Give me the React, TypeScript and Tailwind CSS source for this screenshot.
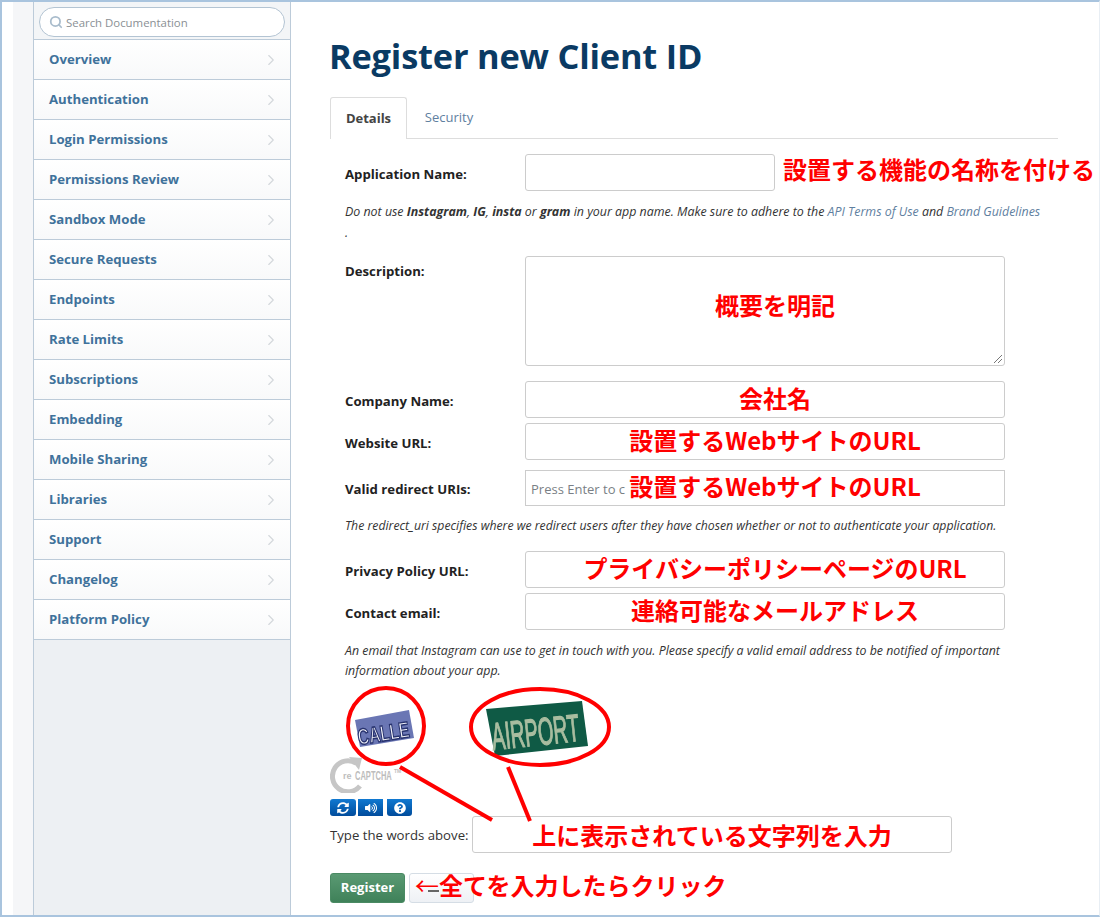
import React from "react";
import { ChevronRight, Search } from "lucide-react";
import { FaQuestionCircle, FaSyncAlt, FaVolumeUp } from "react-icons/fa";

const navItems = [
	"Overview",
	"Authentication",
	"Login Permissions",
	"Permissions Review",
	"Sandbox Mode",
	"Secure Requests",
	"Endpoints",
	"Rate Limits",
	"Subscriptions",
	"Embedding",
	"Mobile Sharing",
	"Libraries",
	"Support",
	"Changelog",
	"Platform Policy",
];

const note = "font-['Noto_Sans_CJK_JP',sans-serif] text-[24px] font-bold leading-none text-[#ff0000]";
const labelClass = "w-[180px] shrink-0 whitespace-nowrap pt-[4px] text-[13.2px] font-bold text-[#222]";

interface FieldProps {
	label: string;
	note?: string;
	className?: string;
}

const Field: React.FC<FieldProps> = ({ label, note: text, className }) => (
	<div className={`flex h-[37px] items-center pl-[15px] ${className ?? ""}`}>
		<label className={labelClass}>{label}</label>
		<div className={`flex h-full w-[480px] items-center justify-center rounded-[3px] border border-[#ccc] pb-[4px] pl-[20px] ${note}`}>
			{text}
		</div>
	</div>
);

const Help: React.FC<{ children: React.ReactNode; className?: string }> = ({ children, className }) => (
	<p className={`pl-[15px] italic leading-[20px] text-[#333] ${className ?? ""}`}>{children}</p>
);

const Sidebar = () => (
	<aside className="flex w-[258px] shrink-0 flex-col border-x border-[#bccbd9] bg-[#edf0f3]">
		<div className="h-[38px] shrink-0 border-b border-[#bccbd9] bg-[#f3f5f7] pl-[5px] pt-[5px]">
			<div className="flex h-[30px] w-[246px] items-center rounded-full border border-[#b3c4d3] bg-white pl-[9px]">
				<Search size={14} strokeWidth={3} className="text-[#a9bccc]" />
				<span className="ml-[3px] pt-[2px] text-[11.4px] text-[#8a8f94]">Search Documentation</span>
			</div>
		</div>
		{navItems.map((item) => (
			<a
				key={item}
				className="flex h-[40px] shrink-0 items-center justify-between border-b border-[#bccbd9] bg-gradient-to-b from-white to-[#f8f9fa] pl-[15px] pr-[10px] text-[13.2px] font-bold text-[#3f729b]"
			>
				{item}
				<ChevronRight size={18} strokeWidth={1.5} className="text-[#d3d7db]" />
			</a>
		))}
	</aside>
);

const CaptchaImages = () => (
	<svg width="262" height="72" viewBox="330 687 262 72" className="block blur-[0.4px]">
		<polygon points="355,720 409,710 414,738 360,747" fill="#6a76b4" />
		<text
			transform="translate(359 745) rotate(-9) scale(1 1.5)"
			textLength="52"
			lengthAdjust="spacingAndGlyphs"
			stroke="#28336f"
			strokeWidth="1"
			className="fill-[#f2f3fa] font-['Liberation_Sans',sans-serif] text-[15px] font-bold"
		>
			CALLE
		</text>
		<polygon points="486,709 582,701 588,746 495,756" fill="#0f5a45" />
		<text
			transform="translate(493 750) rotate(-6) scale(1 1.75)"
			textLength="88"
			lengthAdjust="spacingAndGlyphs"
			stroke="#a9bda0"
			strokeWidth="0.7"
			className="fill-[#a9bda0] font-['Liberation_Sans',sans-serif] text-[22px]"
		>
			AIRPORT
		</text>
	</svg>
);

const RecaptchaLogo = () => (
	<svg width="76" height="36" viewBox="2 0 76 36" className="block">
		<path d="M28 6 A15.5 15.5 0 1 0 32 29" fill="none" stroke="#c6c6c6" strokeWidth="5" />
		<polygon points="21,0 34,1 31,13" fill="#c6c6c6" />
		<g className="fill-[#bdbdbd] font-['Liberation_Sans',sans-serif] font-bold">
			<text x="15" y="22" className="text-[9px]">re</text>
			<text transform="translate(27 23) scale(0.58 1)" className="text-[13px]">CAPTCHA</text>
			<text x="66" y="16" className="text-[5px]">TM</text>
		</g>
	</svg>
);

const CaptchaButton: React.FC<{ children: React.ReactNode; className: string }> = ({ children, className }) => (
	<div className={`flex h-[17px] items-center justify-center bg-gradient-to-b from-[#1179d1] to-[#024c9c] text-white ${className}`}>
		{children}
	</div>
);

export default function App() {
	return (
		<div className="relative flex h-[917px] w-[1100px] overflow-hidden border-b-[2px] border-l-[2px] border-r border-t-[2px] border-[#a9c4de] border-r-[#e8eef4] bg-white font-['Open_Sans',sans-serif]">
			<div className="ml-[11px] w-[20px] shrink-0 bg-[#f5f6f8]" />
			<Sidebar />
			<main className="ml-[39px] w-[728px] shrink-0">
				<h1 className="-ml-[1px] flex h-[95px] items-center pt-[12px] text-[34.4px] font-bold tracking-[-0.2px] text-[#0a3a63]">
					Register new Client ID
				</h1>
				<div className="flex h-[42px] border-b border-[#ddd]">
					<div className="-mb-px flex h-[42px] w-[77px] items-center justify-center rounded-t-[3px] border border-b-0 border-[#ddd] bg-white text-[13px] font-bold text-[#444]">
						Details
					</div>
					<div className="flex w-[84px] items-center justify-center text-[13px] text-[#5f7f9f]">Security</div>
				</div>

				<div className="mt-[15px] flex h-[37px] items-center pl-[15px]">
					<label className={labelClass}>Application Name:</label>
					<div className="h-full w-[250px] shrink-0 rounded-[3px] border border-[#ccc]" />
					<span className={`ml-[8px] whitespace-nowrap pb-[7px] ${note}`}>設置する機能の名称を付ける</span>
				</div>
				<Help className="mt-[11px] whitespace-nowrap text-[12.4px]">
					Do not use <b>Instagram</b>, <b>IG</b>, <b>insta</b> or <b>gram</b> in your app name. Make sure to adhere
					to the <a className="text-[#5f7f9f]">API Terms of Use</a> and{" "}
					<a className="text-[#5f7f9f]">Brand Guidelines</a>
				</Help>
				<Help className="mt-[1px] text-[12.4px]">.</Help>

				<div className="mt-[13px] flex h-[110px] pl-[15px]">
					<label className="w-[180px] shrink-0 pt-[6px] text-[13.2px] font-bold text-[#222]">Description:</label>
					<div className={`relative flex h-full w-[480px] items-center justify-center rounded-[3px] border border-[#ccc] pb-[12px] pl-[20px] ${note}`}>
						概要を明記
						<svg width="10" height="10" viewBox="0 0 10 10" className="absolute bottom-[1px] right-[1px]">
							<path d="M1 9 L9 1 M5 9 L9 5" stroke="#777" strokeWidth="1" />
						</svg>
					</div>
				</div>

				<Field label="Company Name:" note="会社名" className="mt-[15px]" />
				<Field label="Website URL:" note="設置するWebサイトのURL" className="mt-[5px]" />

				<div className="mt-[10px] flex h-[36px] items-center pl-[15px]">
					<label className={labelClass}>Valid redirect URIs:</label>
					<div className="relative flex h-full w-[480px] items-center border border-[#ccc] pl-[5px] pt-[3px] text-[13px] text-[#7a7f85]">
						Press Enter to c
						<span className={`absolute inset-0 flex items-center justify-center pb-[4px] pl-[20px] ${note}`}>
							設置するWebサイトのURL
						</span>
					</div>
				</div>
				<Help className="mt-[10px] whitespace-nowrap text-[12.25px]">
					The redirect_uri specifies where we redirect users after they have chosen whether or not to authenticate
					your application.
				</Help>

				<Field label="Privacy Policy URL:" note="プライバシーポリシーページのURL" className="mt-[15px]" />
				<Field label="Contact email:" note="連絡可能なメールアドレス" className="mt-[5px]" />
				<Help className="mt-[11px] w-[680px] text-[12.35px]">
					An email that Instagram can use to get in touch with you. Please specify a valid email address to be
					notified of important information about your app.
				</Help>

				<div className="mt-[6px]">
					<CaptchaImages />
				</div>
				<div className="-mt-[2px]">
					<RecaptchaLogo />
				</div>
				<div className="mt-[6px] flex h-[17px] gap-[2px]">
					<CaptchaButton className="w-[26px] rounded-[3px]">
						<FaSyncAlt size={12} />
					</CaptchaButton>
					<CaptchaButton className="w-[25px]">
						<FaVolumeUp size={12} />
					</CaptchaButton>
					<CaptchaButton className="ml-[2px] w-[25px] rounded-b-[3px]">
						<FaQuestionCircle size={12} />
					</CaptchaButton>
				</div>

				<div className="flex h-[37px] items-center">
					<label className="w-[142px] shrink-0 pt-[3px] text-[13.2px] text-[#333]">Type the words above:</label>
					<div className={`flex h-full w-[480px] items-center justify-center rounded-[3px] border border-[#ccc] ${note}`}>
						上に表示されている文字列を入力
					</div>
				</div>

				<div className="relative mt-[20px] flex gap-[4px]">
					<button className="h-[30px] w-[75px] rounded-[3px] border border-[#4a8a63] bg-gradient-to-b from-[#5a9a73] to-[#3f8159] text-[13px] font-bold text-white">
						Register
					</button>
					<div className="h-[30px] w-[65px] rounded-[3px] border border-[#d5dde5] bg-gradient-to-b from-white to-[#eef1f5] pl-[18px] pt-[16px]">
						<div className="h-[2px] w-[11px] bg-[#666]" />
					</div>
					<span className={`absolute left-[85px] top-0 whitespace-nowrap ${note}`}>
						<span className="font-normal">←</span>全てを入力したらクリック
					</span>
				</div>
			</main>

			{/* hand drawn callouts over the captcha */}
			<svg width="1100" height="917" viewBox="0 0 1100 917" className="pointer-events-none absolute -left-[2px] -top-[2px]">
				<ellipse cx="386" cy="726" rx="38" ry="38" fill="none" stroke="#f00" strokeWidth="4" />
				<ellipse cx="540" cy="727" rx="69" ry="38" fill="none" stroke="#f00" strokeWidth="4" />
				<line x1="400" y1="767" x2="492" y2="820" stroke="#f00" strokeWidth="4" />
				<line x1="508" y1="767" x2="530" y2="821" stroke="#f00" strokeWidth="4" />
			</svg>
		</div>
	);
}
